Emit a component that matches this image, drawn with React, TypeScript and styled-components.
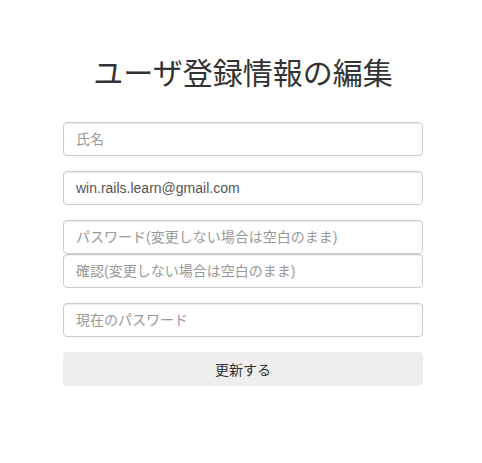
import styled, { createGlobalStyle } from "styled-components";

const GlobalStyle = createGlobalStyle`
  body {
    margin: 0;
    background: #ffffff;
    font-family: "Liberation Sans", "Noto Sans CJK JP", sans-serif;
    color: #333333;
  }
`;

const Page = styled.main`
  padding: 57px 0 0 4px;
`;

const Title = styled.h1`
  margin: 0 0 32px;
  font-size: 30px;
  font-weight: 400;
  line-height: 1.1;
  text-align: center;
  color: #333333;
`;

const Form = styled.form`
  display: flex;
  flex-direction: column;
  width: 360px;
  margin: 0 auto;
`;

const Field = styled.input<{ $joined?: boolean }>`
  box-sizing: border-box;
  height: 34px;
  width: 100%;
  margin: 0 0 ${(p) => (p.$joined ? "0" : "15px")};
  padding: 6px 12px;
  font-family: inherit;
  font-size: 14px;
  color: #555555;
  background: #ffffff;
  border: 1px solid #cccccc;
  border-radius: 4px;
  box-shadow: inset 0 1px 1px rgba(0, 0, 0, 0.075);
  outline: none;

  &::placeholder {
    color: #999999;
  }
`;

const Submit = styled.button`
  height: 34px;
  width: 100%;
  padding: 6px 12px;
  font-family: inherit;
  font-size: 14px;
  color: #333333;
  background: #eeeeee;
  border: none;
  border-radius: 4px;
  cursor: pointer;
`;

const App = () => {
  return (
    <>
      <GlobalStyle />
      <Page>
        <Title>ユーザ登録情報の編集</Title>
        <Form onSubmit={(e) => e.preventDefault()}>
          <Field type="text" placeholder="氏名" />
          <Field type="email" defaultValue="win.rails.learn@gmail.com" />
          <Field
            type="password"
            placeholder="パスワード(変更しない場合は空白のまま)"
            $joined
          />
          <Field
            type="password"
            placeholder="確認(変更しない場合は空白のまま)"
          />
          <Field type="password" placeholder="現在のパスワード" />
          <Submit type="submit">更新する</Submit>
        </Form>
      </Page>
    </>
  );
};

export default App;
